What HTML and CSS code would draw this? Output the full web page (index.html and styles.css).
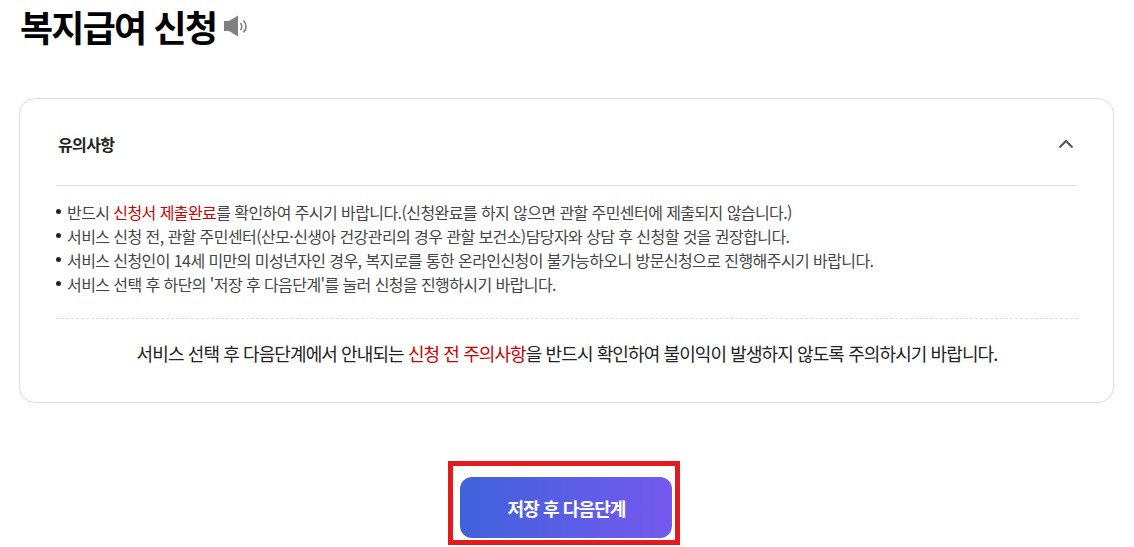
FILE: index.html
```html
<!DOCTYPE html>
<html lang="ko">
<head>
    <meta charset="UTF-8">
    <meta name="viewport" content="width=device-width, initial-scale=1.0">
    <title>복지급여 신청</title>
    <link rel="stylesheet" href="styles.css">
</head>
<body>
    <div class="title">
        <h1>복지급여 신청</h1>
        <svg class="speaker" width="26" height="24" viewBox="0 0 26 24">
            <path d="M1 7h5l9-5.500v21l-9-5.500H1z" fill="#808080"/>
            <path d="M17.500 9q2.600 3.500 0 7M20.500 6.500q5 6 0 12" fill="none" stroke="#808080" stroke-width="1.600"/>
        </svg>
    </div>

    <div class="notice">
        <div class="notice-head">
            <h2>유의사항</h2>
            <svg class="arrow" width="16" height="10" viewBox="0 0 16 10">
                <path d="M1.500 8.500l6.500-6.500 6.500 6.500" fill="none" stroke="#555" stroke-width="2"/>
            </svg>
        </div>
        <ul class="notice-list">
            <li><span>반드시 <em>신청서 제출완료</em>를 확인하여 주시기 바랍니다.(신청완료를 하지 않으면 관할 주민센터에 제출되지 않습니다.)</span></li>
            <li><span>서비스 신청 전, 관할 주민센터(산모·신생아 건강관리의 경우 관할 보건소)담당자와 상담 후 신청할 것을 권장합니다.</span></li>
            <li><span>서비스 신청인이 14세 미만의 미성년자인 경우, 복지로를 통한 온라인신청이 불가능하오니 방문신청으로 진행해주시기 바랍니다.</span></li>
            <li><span>서비스 선택 후 하단의 '저장 후 다음단계'를 눌러 신청을 진행하시기 바랍니다.</span></li>
        </ul>
        <p class="guide">서비스 선택 후 다음단계에서 안내되는 <em>신청 전 주의사항</em>을 반드시 확인하여 불이익이 발생하지 않도록 주의하시기 바랍니다.</p>
    </div>

    <div class="btn-area">
        <div class="btn-mark">
            <button type="button" class="btn-next">저장 후 다음단계</button>
        </div>
    </div>
</body>
</html>
```
FILE: styles.css
```css
* {
    box-sizing: border-box;
}
body {
    margin: 0;
    padding: 0 20px 0 19px;
    background: #fff;
    color: #222;
    font-family: "Noto Sans CJK KR", sans-serif;
}
h1, h2, p, ul {
    margin: 0;
    padding: 0;
}
.title {
    display: flex;
    align-items: center;
    gap: 7px;
    height: 54px;
    padding: 0 0 2px 1px;
}
h1 {
    color: #000;
    font-size: 36px;
    font-weight: 700;
    line-height: 50px;
    letter-spacing: -1.8px;
}
.notice {
    height: 305px;
    margin-top: 44px;
    padding: 0 35px 0 36px;
    border: 1px solid #ddd;
    border-radius: 16px;
}
.notice-head {
    display: flex;
    align-items: center;
    justify-content: space-between;
    height: 87px;
    padding: 3px 4px 0 2px;
    border-bottom: 1px solid #ddd;
}
h2 {
    font-size: 16px;
    font-weight: 700;
    letter-spacing: -0.6px;
}
.notice-list {
    height: 133px;
    padding-top: 14px;
    border-bottom: 1px dashed #ddd;
    list-style: none;
}
.notice-list li {
    display: flex;
    gap: 6px;
    color: #444;
    font-size: 16px;
    line-height: 24px;
    letter-spacing: -0.58px;
    white-space: nowrap;
}
.notice-list li::before {
    content: "";
    width: 5px;
    height: 5px;
    margin-top: 9px;
    border-radius: 50%;
    background: #222;
}
em {
    color: #c00;
    font-style: normal;
}
.guide {
    padding-top: 21px;
    font-size: 18px;
    line-height: 26px;
    letter-spacing: -0.9px;
    text-align: center;
    white-space: nowrap;
}
.btn-area {
    display: flex;
    justify-content: center;
    margin-top: 58px;
    padding-right: 6px;
}
.btn-mark {
    width: 232px;
    height: 84px;
    padding: 11px 7px;
    border: 5px solid #e31b1f;
}
.btn-next {
    width: 212px;
    height: 61px;
    padding: 0 0 0 2px;
    border: 0;
    border-radius: 12px;
    background: linear-gradient(90deg, #3f62dc, #7559ee);
    color: #fff;
    font-family: inherit;
    font-size: 18px;
    font-weight: 700;
    letter-spacing: -0.9px;
}
```
